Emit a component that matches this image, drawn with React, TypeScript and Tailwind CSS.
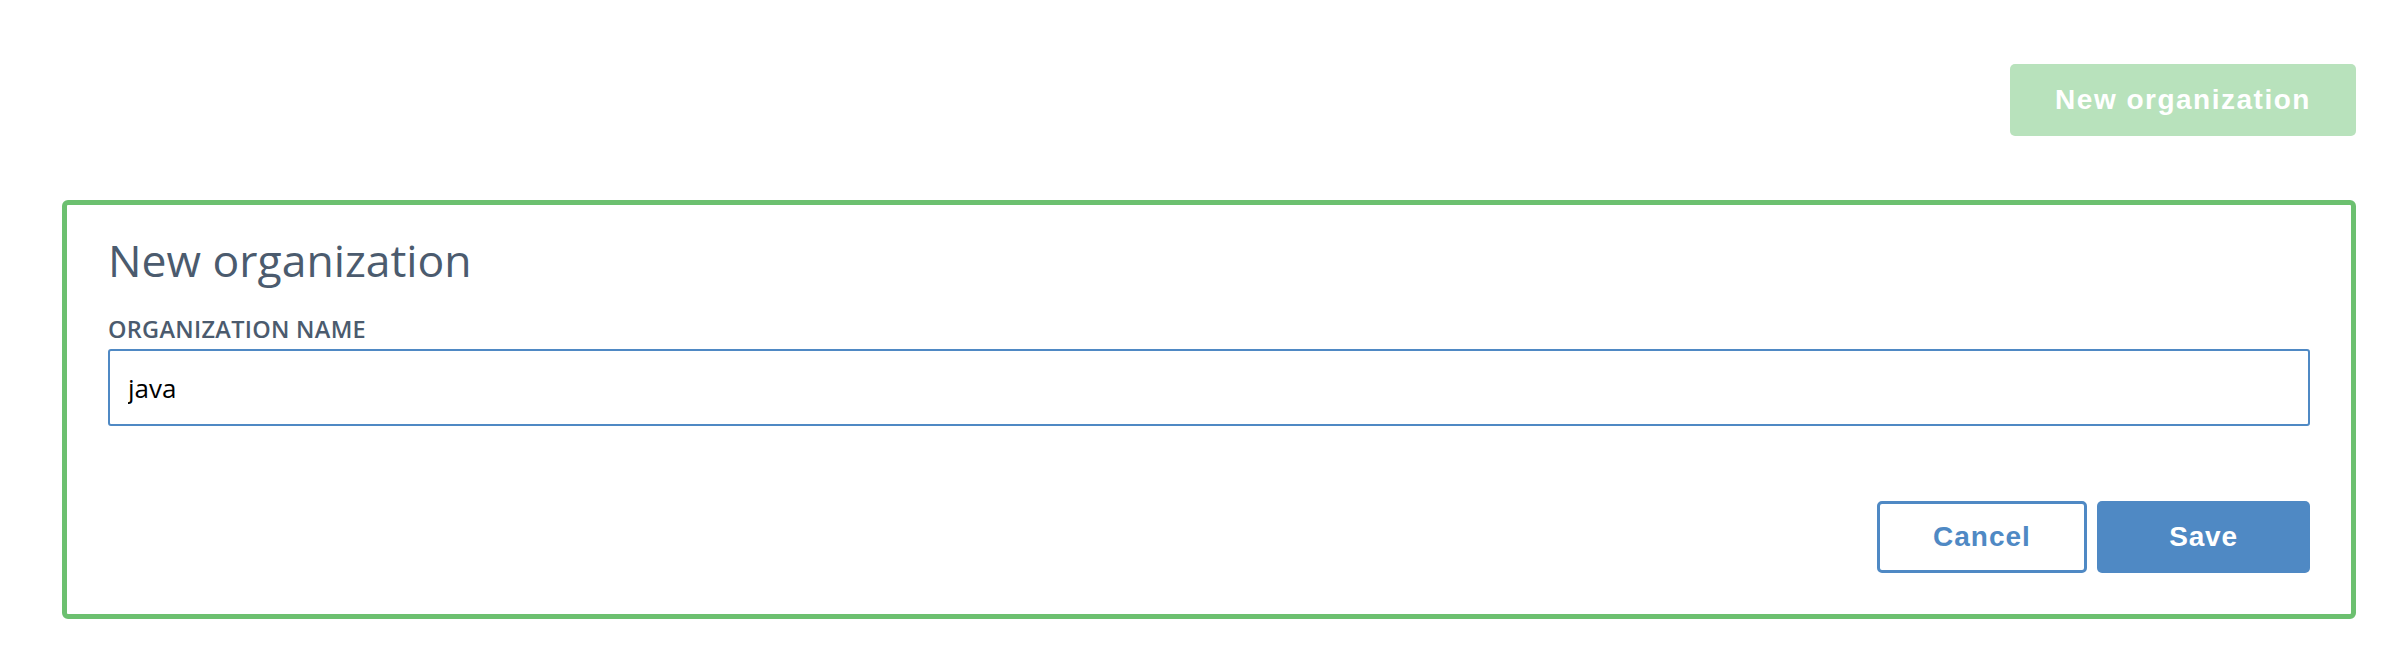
export default function App() {
  return (
    <div className="min-h-screen w-full bg-white" style={{ fontFamily: '"Open Sans", "Noto Sans", sans-serif' }}>
      <div className="flex justify-end pr-[38px] pt-[64px]">
        <button
          type="button"
          className="h-[72px] w-[346px] rounded-[5px] bg-[#b8e2bc] text-[28px] font-bold tracking-[1.5px] text-white"
          style={{ fontFamily: '"Liberation Sans", Arial, sans-serif' }}
        >
          New organization
        </button>
      </div>

      <div className="ml-[62px] mr-[38px] mt-[64px] rounded-[6px] border-[5px] border-[#6cc070] px-[41px] pb-[41px] pt-[33px]">
        <h2 className="text-[44.5px] font-normal leading-none text-[#4b5b6e]">New organization</h2>
        <label className="mt-[35px] block text-[23.5px] font-semibold leading-none tracking-[0.3px] text-[#4b5b6e]">
          ORGANIZATION NAME
        </label>
        <input
          type="text"
          defaultValue="java"
          className="mt-[8px] h-[77px] w-full rounded-[3px] border-2 border-[#4f89c4] pl-[18px] text-[26px] text-black outline-none"
        />
        <div
          className="mt-[75px] flex justify-end gap-[10px]"
          style={{ fontFamily: '"Liberation Sans", Arial, sans-serif' }}
        >
          <button
            type="button"
            className="h-[72px] w-[210px] rounded-[5px] border-[3px] border-[#4f89c4] bg-white text-[28px] font-bold tracking-[1px] text-[#4f89c4]"
          >
            Cancel
          </button>
          <button
            type="button"
            className="h-[72px] w-[213px] rounded-[5px] bg-[#4f89c4] text-[28px] font-bold tracking-[0.8px] text-white"
          >
            Save
          </button>
        </div>
      </div>
    </div>
  );
}
